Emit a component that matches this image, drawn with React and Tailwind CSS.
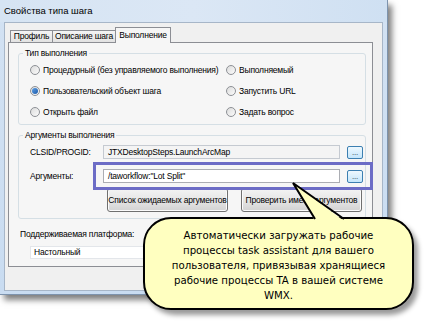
import React from "react";

const Radio = ({ checked, label }) => (
  <div className="flex items-center gap-[3px] h-[12px] whitespace-nowrap">
    <span className="w-[10px] h-[10px] rounded-full border border-[#8d9095] bg-gradient-to-br from-[#dcdcdc] to-[#fbfbfb] flex items-center justify-center shrink-0">
      {checked && <span className="w-[6px] h-[6px] rounded-full bg-gradient-to-br from-[#5ea0e6] to-[#1c5aa8]" />}
    </span>
    <span>{label}</span>
  </div>
);

const Ellipsis = () => (
  <div className="w-[16px] h-[13px] rounded-[2px] border border-[#3c7fb1] bg-gradient-to-b from-[#eef8fe] to-[#c4e6fb] flex items-end justify-center text-[8px] leading-[8px] text-[#333] pb-[1px]">
    ...
  </div>
);

const Button = ({ children }) => (
  <div className="w-[121px] h-[24px] rounded-[3px] border border-[#707070] bg-gradient-to-b from-[#f3f3f3] via-[#e6e6e6] to-[#d2d2d2] flex items-center justify-center whitespace-nowrap shadow-[inset_0_0_0_1px_#fbfbfb]">
    {children}
  </div>
);

export default function App() {
  return (
    <div className="relative w-[443px] h-[326px] bg-white overflow-hidden font-['Liberation_Sans',sans-serif] text-[8.5px] tracking-[-0.2px] text-black leading-none">
      {/* window */}
      <div className="w-[388px] h-[295px] flex flex-col bg-gradient-to-b from-[#d3e2f3] to-[#c9dcf1] border-r border-b border-[#7d93ad] shadow-[4px_5px_6px_rgba(0,0,0,0.5)]">
        <div className="h-[22px] shrink-0 flex items-center pl-[4px] text-[9.5px] tracking-normal bg-gradient-to-r from-[#d6e4f3] via-[#dbe7f5] to-[#cfe0f2]">
          Свойства типа шага
        </div>
        <div className="flex-1 mx-[4px] mb-[3px] border border-[#a7b6c8] bg-[#f0f0f0] pt-[4px] pl-[3px] pr-[9px]">
          {/* tabs */}
          <div className="h-[15px] flex items-end pl-[2px] relative z-10">
            <div className="w-[43px] h-[12px] border border-b-0 border-[#8c8e94] bg-gradient-to-b from-[#f4f4f4] to-[#e2e2e2] flex items-center justify-center">
              Профиль
            </div>
            <div className="w-[64px] h-[12px] -ml-px border border-b-0 border-[#8c8e94] bg-gradient-to-b from-[#f4f4f4] to-[#e2e2e2] flex items-center justify-center whitespace-nowrap">
              Описание шага
            </div>
            <div className="w-[56px] h-[16px] -ml-px -mb-px border border-b-0 border-[#8c8e94] bg-[#f6f6f6] flex items-center justify-center pb-[1px]">
              Выполнение
            </div>
          </div>
          {/* panel */}
          <div className="h-[225px] border border-[#8c8e94] bg-[#f6f6f6] pt-[10px] pl-[9px] pr-[6px]">
            {/* group 1 */}
            <div className="relative h-[72px] border border-[#d5dfe5] rounded-[3px] pt-[10px] pl-[11px]">
              <span className="absolute -top-[5px] left-[4px] px-[2px] bg-[#f6f6f6]">Тип выполнения</span>
              <div className="grid grid-cols-[196px_1fr] gap-y-[9px]">
                <Radio label="Процедурный (без управляемого выполнения)" />
                <Radio label="Выполняемый" />
                <Radio checked label="Пользовательский объект шага" />
                <Radio label="Запустить URL" />
                <Radio label="Открыть файл" />
                <Radio label="Задать вопрос" />
              </div>
            </div>
            {/* group 2 */}
            <div className="relative mt-[10px] h-[84px] border border-[#d5dfe5] rounded-[3px] pt-[9px]">
              <span className="absolute -top-[5px] left-[4px] px-[2px] bg-[#f6f6f6] whitespace-nowrap">Аргументы выполнения</span>
              <div className="flex items-center pl-[11px] h-[14px]">
                <span className="w-[73px]">CLSID/PROGID:</span>
                <div className="w-[237px] h-[14px] border border-[#c5cad1] bg-[#f4f4f4] flex items-center pl-[4px] whitespace-nowrap">
                  JTXDesktopSteps.LaunchArcMap
                </div>
                <div className="ml-[7px]"><Ellipsis /></div>
              </div>
              <div className="flex items-center pl-[11px] h-[14px] mt-[10px]">
                <span className="w-[73px]">Аргументы:</span>
                <div className="w-[237px] h-[14px] border border-[#abadb3] bg-white flex items-center pl-[4px] whitespace-nowrap">
                  /taworkflow:"Lot Split"
                </div>
                <div className="ml-[7px]"><Ellipsis /></div>
              </div>
              <div className="flex gap-[13px] pl-[88px] mt-[5px]">
                <Button>Список ожидаемых аргументов</Button>
                <Button>Проверить имена аргументов</Button>
              </div>
            </div>
            {/* platform */}
            <div className="mt-[11px] pl-[2px]">Поддерживаемая платформа:</div>
            <div className="mt-[7px] ml-[12px] w-[250px] h-[13px] bg-white border border-[#e3e6ea] flex items-center pl-[3px]">
              Настольный
            </div>
          </div>
        </div>
      </div>

      {/* highlight */}
      <div className="absolute left-[93px] top-[162px] w-[280px] h-[28px] border-[3px] border-[#6c6cc6]" />

      {/* callout */}
      <div className="absolute left-[143px] top-[217px] w-[271px] h-[93px] rounded-[28px] border-2 border-black bg-[#ffffc0] shadow-[4px_5px_5px_rgba(0,0,0,0.4)] flex items-center justify-center text-center font-['DejaVu_Sans',sans-serif] text-[10.2px] tracking-normal leading-[15px] whitespace-nowrap pt-[3px]">
        <div>
          Автоматически загружать рабочие<br />
          процессы task assistant для вашего<br />
          пользователя, привязывая хранящиеся<br />
          рабочие процессы TA в вашей системе<br />
          WMX.
        </div>
      </div>
      <svg className="absolute left-0 top-0" width="443" height="326" viewBox="0 0 443 326">
        <polygon points="315,221 293,183 344,221" fill="#ffffc0" />
        <polyline points="315,219 293,183 344,219" fill="none" stroke="black" strokeWidth="2" strokeLinejoin="miter" />
      </svg>
    </div>
  );
}
